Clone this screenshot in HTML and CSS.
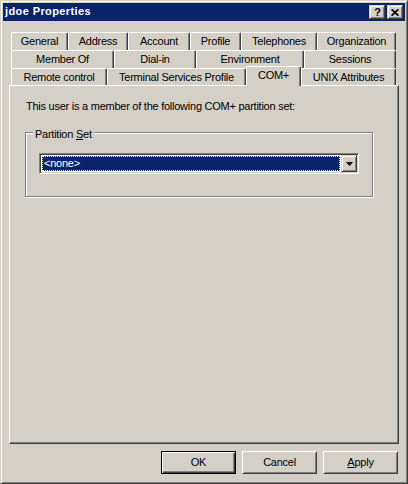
FILE: index.html
```html
<!DOCTYPE html>
<html>
<head>
<meta charset="utf-8">
<title>jdoe Properties</title>
<link rel="stylesheet" href="styles.css">
</head>
<body>
<div class="window">
  <div class="titlebar">
    <span class="title">jdoe Properties</span>
    <div class="caption-buttons">
      <span class="cap-btn help">?</span>
      <span class="cap-btn close"><svg width="8" height="7" viewBox="0 0 8 7"><path d="M0.6 0.3 L7.4 6.7 M7.4 0.3 L0.6 6.7" stroke="#000" stroke-width="1.7" fill="none"/></svg></span>
    </div>
  </div>
  <div class="client">
    <div class="tabs">
      <div class="tab-row">
        <div class="tab t-general">General</div>
        <div class="tab t-address">Address</div>
        <div class="tab t-account">Account</div>
        <div class="tab t-profile">Profile</div>
        <div class="tab t-telephones">Telephones</div>
        <div class="tab t-organization">Organization</div>
      </div>
      <div class="tab-row">
        <div class="tab t-memberof">Member Of</div>
        <div class="tab t-dialin">Dial-in</div>
        <div class="tab t-environment">Environment</div>
        <div class="tab t-sessions">Sessions</div>
      </div>
      <div class="tab-row last">
        <div class="tab t-remote">Remote control</div>
        <div class="tab t-tsprofile">Terminal Services Profile</div>
        <div class="tab t-complus active">COM+</div>
        <div class="tab t-unix">UNIX Attributes</div>
      </div>
    </div>
    <div class="panel">
      <p class="intro">This user is a member of the following COM+ partition set:</p>
      <div class="group">
        <span class="group-label">Partition <u>S</u>et</span>
        <div class="combo">
          <div class="combo-field"><span class="combo-sel">&lt;none&gt;</span></div>
          <div class="combo-btn"><svg width="7" height="4" viewBox="0 0 7 4"><polygon points="0,0 7,0 3.5,4" fill="#000"/></svg></div>
        </div>
      </div>
    </div>
    <div class="buttons">
      <button class="btn default">OK</button>
      <button class="btn">Cancel</button>
      <button class="btn"><u>A</u>pply</button>
    </div>
  </div>
</div>
</body>
</html>
```

FILE: styles.css
```css
html, body {
  margin: 0;
  padding: 0;
  background: #d4d0c8;
}

body {
  font-family: "Liberation Sans", Arial, sans-serif;
  font-size: 11px;
  line-height: 13px;
  letter-spacing: -0.25px;
  color: #000;
}

.window {
  width: 408px;
  height: 484px;
  box-sizing: border-box;
  border: 1px solid;
  border-color: #d4d0c8 #404040 #404040 #d4d0c8;
  box-shadow: inset 1px 1px 0 #fff, inset -1px -1px 0 #808080;
  padding: 2px;
  background: #d4d0c8;
  display: flex;
  flex-direction: column;
}

/* title bar */
.titlebar {
  height: 18px;
  background: #0a246a;
  display: flex;
  align-items: center;
  justify-content: space-between;
  padding: 0 2px 0 2px;
  flex: none;
}

.title {
  color: #fff;
  font-weight: bold;
  letter-spacing: 0.4px;
  margin-bottom: 1px;
}

.caption-buttons {
  display: flex;
  gap: 2px;
}

.cap-btn {
  width: 16px;
  height: 14px;
  box-sizing: border-box;
  border: 1px solid;
  border-color: #d4d0c8 #404040 #404040 #d4d0c8;
  box-shadow: inset 1px 1px 0 #fff, inset -1px -1px 0 #808080;
  background: #d4d0c8;
  display: flex;
  align-items: center;
  justify-content: center;
}

.cap-btn.help {
  font-weight: bold;
  font-size: 11px;
  line-height: 11px;
  letter-spacing: 0;
  padding-left: 1px;
}

.cap-btn.close svg {
  display: block;
}

/* client area */
.client {
  flex: 1;
  display: flex;
  flex-direction: column;
  padding: 11px 6px 0 6px;
}

.tabs {
  margin: 0 2px;
}

.tab-row {
  display: flex;
  height: 18px;
  align-items: flex-start;
}

.tab-row.last {
  height: 17px;
}

.tab {
  box-sizing: border-box;
  height: 18px;
  border-top: 1px solid #fff;
  border-left: 1px solid #fff;
  border-right: 1px solid #404040;
  border-radius: 2px 2px 0 0;
  box-shadow: inset -1px 0 0 #808080;
  background: #d4d0c8;
  padding-top: 2px;
  text-align: center;
  white-space: nowrap;
  overflow: hidden;
}

.tab-row.last .tab {
  height: 17px;
}

.tab-row.last .tab.active {
  height: 20px;
  margin-top: -2px;
  position: relative;
  z-index: 1;
}

.t-general { width: 57px; }
.t-address { width: 60px; }
.t-account { width: 62px; }
.t-profile { width: 51px; }
.t-telephones { width: 76px; }
.t-organization { width: 79px; }

.t-memberof { width: 103px; }
.t-dialin { width: 82px; }
.t-environment { width: 108px; }
.t-sessions { width: 92px; }

.t-remote { width: 96px; }
.t-tsprofile { width: 139px; }
.t-complus { width: 55px; }
.t-unix { width: 95px; }

/* panel */
.panel {
  height: 359px;
  box-sizing: border-box;
  border-top: 1px solid #fff;
  border-left: 1px solid #fff;
  border-right: 1px solid #404040;
  border-bottom: 1px solid #404040;
  box-shadow: inset -1px -1px 0 #808080;
  padding: 14px 16px 0 16px;
  flex: none;
}

.intro {
  margin: 0;
  white-space: nowrap;
}

.group {
  position: relative;
  margin: 19px 0 0 -1px;
  width: 348px;
  box-sizing: border-box;
  border: 1px solid #808080;
  box-shadow: inset 1px 1px 0 #fff, 1px 1px 0 #fff;
  padding: 20px 13px 22px 13px;
}

.group-label {
  position: absolute;
  top: -5px;
  left: 7px;
  padding: 0 2px;
  background: #d4d0c8;
  white-space: nowrap;
}

.combo {
  width: 320px;
  height: 21px;
  box-sizing: border-box;
  border: 1px solid;
  border-color: #808080 #fff #fff #808080;
  box-shadow: inset 1px 1px 0 #404040, inset -1px -1px 0 #d4d0c8;
  padding: 1px;
  background: #fff;
  display: flex;
}

.combo-field {
  flex: 1;
  padding: 1px;
  background: #fff;
}

.combo-sel {
  display: block;
  height: 15px;
  box-sizing: border-box;
  background: #0a246a;
  color: #fff;
  outline: 1px dotted #f4f0b8;
  outline-offset: -1px;
  padding: 1px 0 0 2px;
  line-height: 13px;
}

.combo-btn {
  width: 16px;
  height: 17px;
  box-sizing: border-box;
  border: 1px solid;
  border-color: #d4d0c8 #404040 #404040 #d4d0c8;
  box-shadow: inset 1px 1px 0 #fff, inset -1px -1px 0 #808080;
  background: #d4d0c8;
  display: flex;
  align-items: center;
  justify-content: center;
}

.combo-btn svg {
  display: block;
}

/* dialog buttons */
.buttons {
  display: flex;
  justify-content: flex-end;
  gap: 6px;
  margin-top: 7px;
  padding-right: 1px;
}

.btn {
  width: 75px;
  height: 23px;
  box-sizing: border-box;
  margin: 0;
  padding: 0;
  font: inherit;
  letter-spacing: inherit;
  color: #000;
  background: #d4d0c8;
  border: 1px solid;
  border-color: #fff #404040 #404040 #fff;
  box-shadow: inset 1px 1px 0 #d4d0c8, inset -1px -1px 0 #808080;
  border-radius: 0;
  text-align: center;
}

.btn.default {
  border-color: #000;
  box-shadow: inset 1px 1px 0 #fff, inset -1px -1px 0 #404040, inset -2px -2px 0 #808080;
}
```
